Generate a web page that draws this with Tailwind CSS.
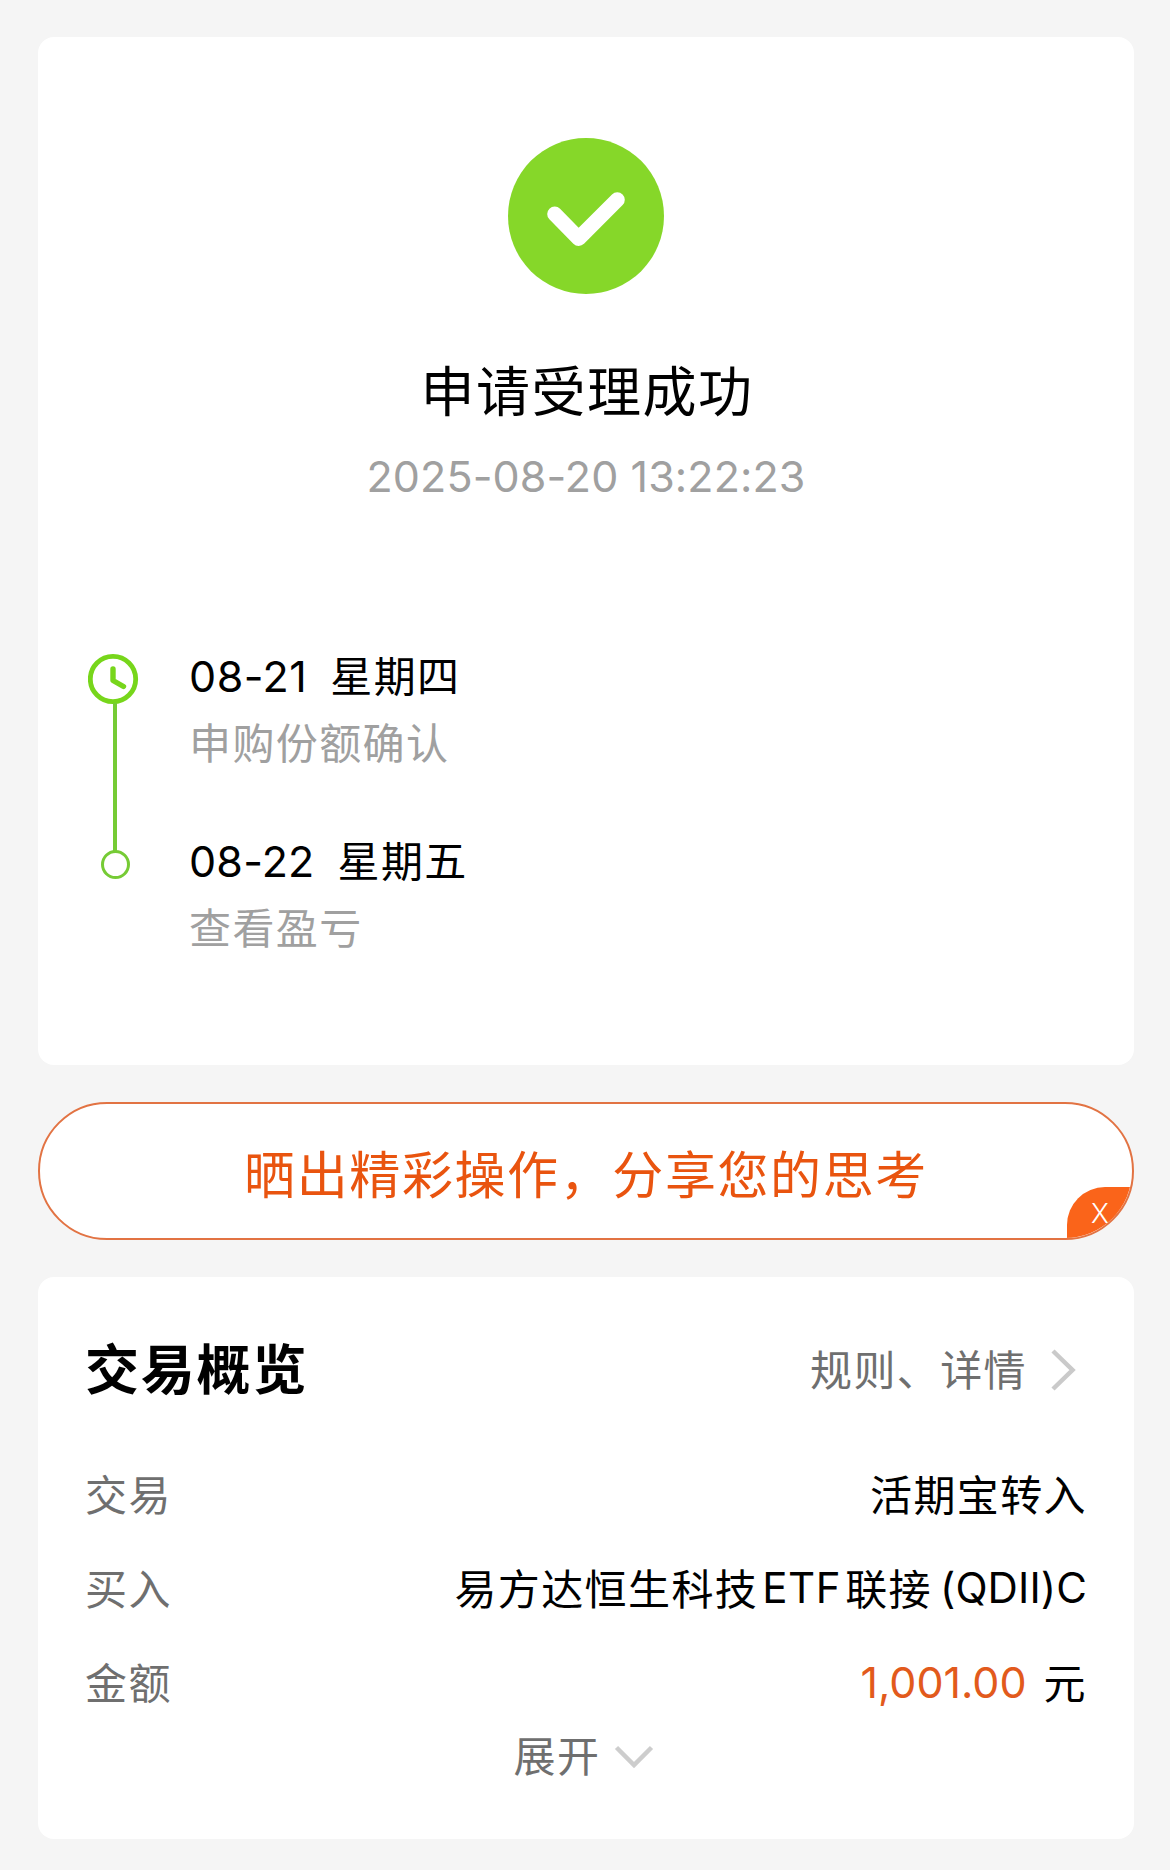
<!DOCTYPE html>
<html lang="zh-CN">
<head>
    <meta charset="UTF-8">
    <meta name="viewport" content="width=device-width, initial-scale=1.0">
    <title>申请受理成功</title>
    <script src="https://cdn.jsdelivr.net/npm/@tailwindcss/browser@4"></script>
</head>
<body class="bg-[#f5f5f5] min-h-screen pt-[37px] pl-[38px] pr-9 text-black font-['Inter','Noto_Sans_CJK_SC',sans-serif] text-[42px] leading-[60px] tracking-[1.4px] whitespace-nowrap">
    <!-- Result -->
    <section class="bg-white rounded-2xl h-[1028px] pt-[101px]">
        <svg class="block mx-auto w-[156px] h-[156px]" viewBox="0 0 156 156" fill="none">
            <circle cx="78" cy="78" r="78" fill="#86d729" />
            <path d="M46.7 76L70.7 100.4L109.3 61.7" stroke="#fff" stroke-width="15" stroke-linecap="round" stroke-linejoin="round" />
        </svg>
        <h1 class="mt-[59px] pl-[2px] text-center text-[54px] leading-[80px] tracking-[1.5px]">申请受理成功</h1>
        <p class="mt-[13px] text-center text-[43px] tracking-[0.1px] text-[#a0a0a0]">2025-08-20 13:22:23</p>

        <!-- Timeline -->
        <div class="flex mt-[139px] pl-[50px]">
            <svg class="w-[54px] h-[240px] mt-[4px]" viewBox="0 0 54 240" fill="none">
                <circle cx="25" cy="30" r="22.7" stroke="#77d61b" stroke-width="4.8" />
                <path d="M25 20V31.5L35.5 37.5" stroke="#77d61b" stroke-width="5.4" stroke-linecap="round" stroke-linejoin="round" />
                <path d="M27 54V202" stroke="#76cb35" stroke-width="4" />
                <circle cx="27.5" cy="215.5" r="13" stroke="#76cb35" stroke-width="3" />
            </svg>
            <ul class="pt-[1px] pl-[47px]">
                <li class="flex flex-col gap-[7px] h-[185px]">
                    <div class="flex gap-[23px]"><span class="text-[43px] tracking-[0.5px]">08-21</span><span class="mt-[1px]">星期四</span></div>
                    <p class="text-[#a0a0a0]">申购份额确认</p>
                </li>
                <li class="flex flex-col gap-[7px]">
                    <div class="flex gap-[23px]"><span class="text-[43px] tracking-[0.2px]">08-22</span><span class="mt-[1px]">星期五</span></div>
                    <p class="text-[#a0a0a0]">查看盈亏</p>
                </li>
            </ul>
        </div>
    </section>

    <!-- Share banner -->
    <section class="relative overflow-hidden mt-[37px] h-[138px] rounded-full border-2 border-[#e27343] bg-white flex items-center justify-center">
        <p class="text-[51px] tracking-[1.6px] text-[#e9540f] pt-[9px]">晒出精彩操作，分享您的思考</p>
        <button class="absolute -right-0.5 -bottom-0.5 w-[67px] h-[53px] rounded-tl-[38px] bg-[#fa641a] text-white text-[27px] font-light leading-[53px] tracking-normal text-left pl-[24px]">X</button>
    </section>

    <!-- Overview -->
    <section class="bg-white rounded-2xl mt-[37px] h-[562px] pt-[54px] pl-[47px] pr-[47px]">
        <div class="flex items-center justify-between h-[80px]">
            <h2 class="text-[54px] font-bold leading-[80px] tracking-[1.8px]">交易概览</h2>
            <a class="flex items-center text-[#6f6f6f] pr-[11px]">
                <span>规则、详情</span>
                <svg class="ml-[23px] w-[26px] h-[44px]" viewBox="0 0 26 44" fill="none">
                    <path d="M3 2L22.5 21L3 40" stroke="#cacaca" stroke-width="4.5" />
                </svg>
            </a>
        </div>
        <dl class="mt-[55px] flex flex-col gap-[34px]">
            <div class="flex justify-between">
                <dt class="text-[#6f6f6f]">交易</dt>
                <dd>活期宝转入</dd>
            </div>
            <div class="flex justify-between">
                <dt class="text-[#6f6f6f]">买入</dt>
                <dd class="flex"><span>易方达恒生科技</span><span class="-mt-[2px] ml-[4px] tracking-[0.6px]">ETF</span><span class="ml-[4px]">联接</span><span class="-mt-[2px] ml-[8px] tracking-[0.1px]">(QDII)C</span></dd>
            </div>
            <div class="flex justify-between">
                <dt class="text-[#6f6f6f]">金额</dt>
                <dd class="flex gap-[17px]"><span class="-mt-[2px] text-[43px] tracking-normal text-[#e25a1c]">1,001.00</span><span>元</span></dd>
            </div>
        </dl>
        <button class="flex items-center mx-auto mt-[13px] pr-[4px] text-[#6f6f6f]">
            <span>展开</span>
            <svg class="ml-[14px] w-[40px] h-[24px]" viewBox="0 0 40 24" fill="none">
                <path d="M2.5 2.5L20 20L37.5 2.5" stroke="#cdcdcd" stroke-width="4.5" />
            </svg>
        </button>
    </section>
</body>
</html>
